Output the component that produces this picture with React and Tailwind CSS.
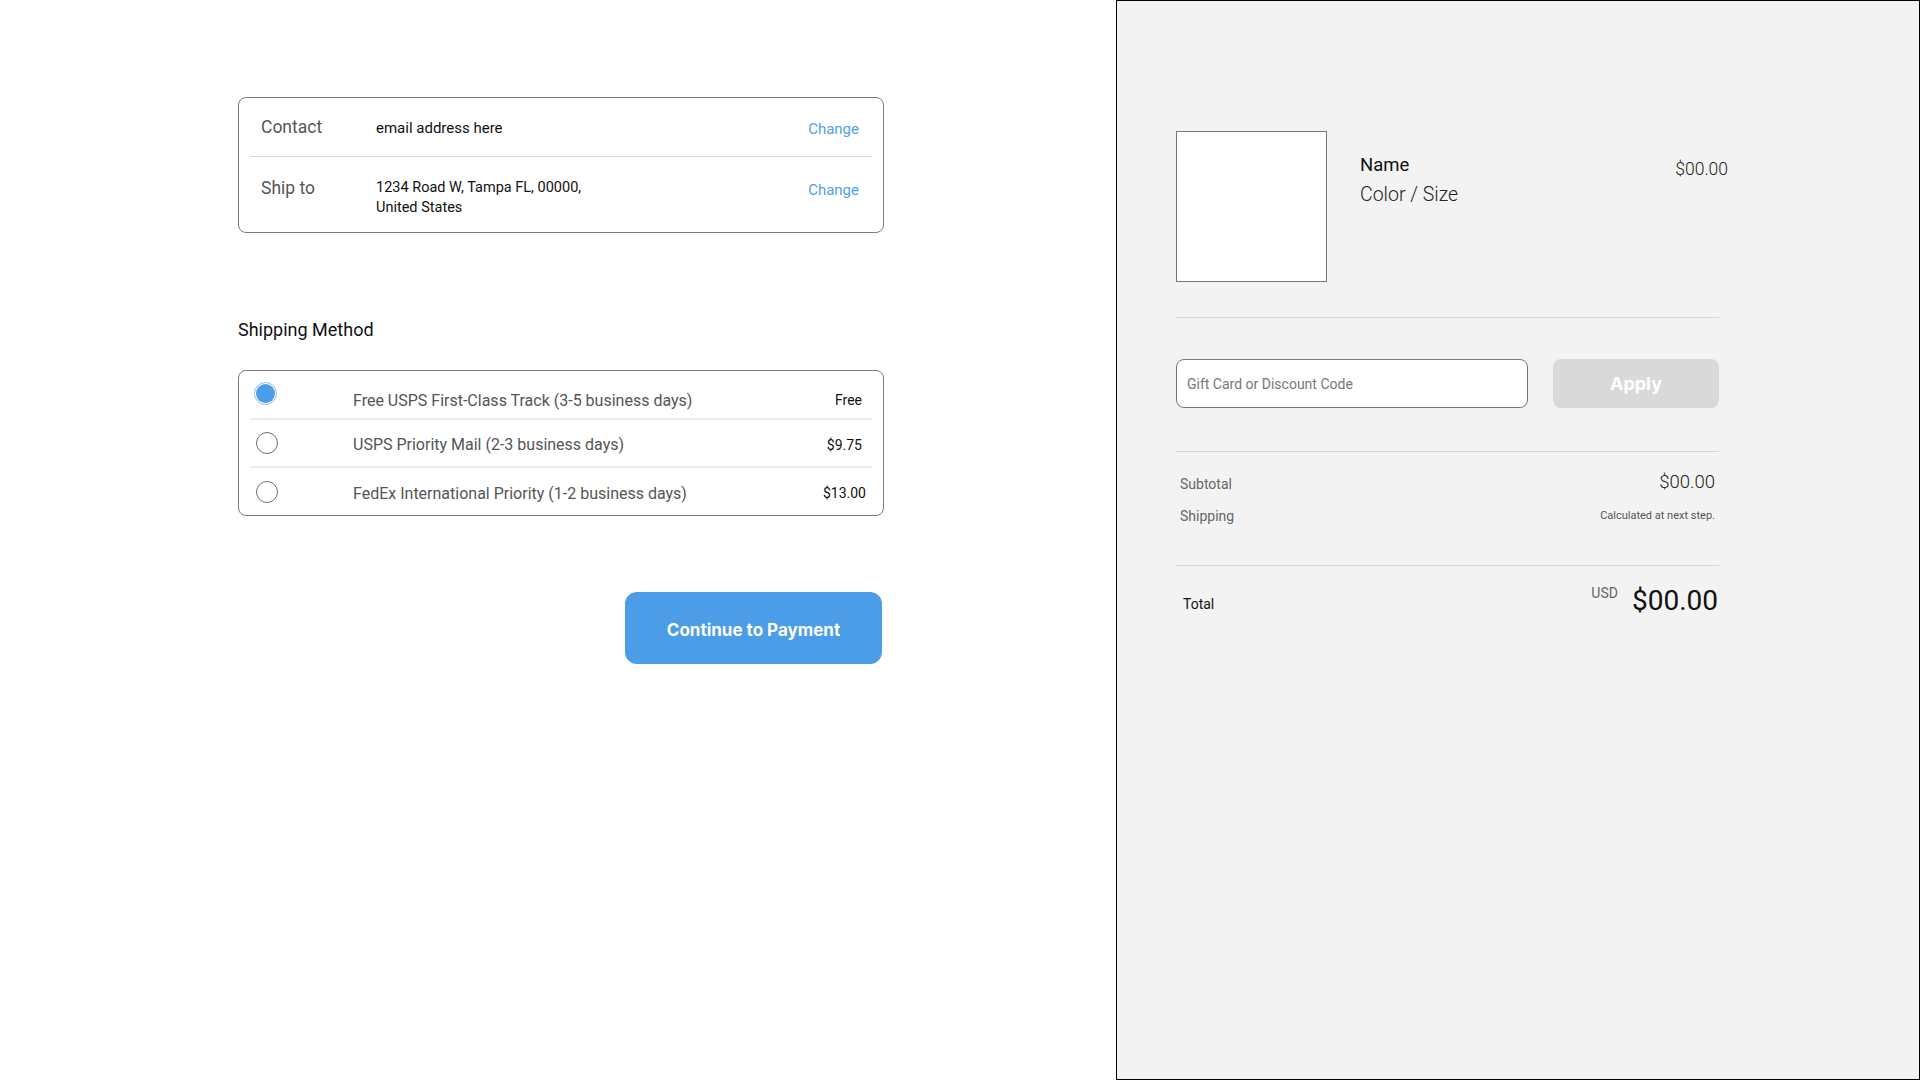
import React, { useState } from "react";

const methods = [
  { id: "usps-first", label: "Free USPS First-Class Track (3-5 business days)", price: "Free", h: "h-[49px]" },
  { id: "usps-priority", label: "USPS Priority Mail (2-3 business days)", price: "$9.75", h: "h-[48px]" },
  { id: "fedex", label: "FedEx International Priority (1-2 business days)", price: "$13.00", h: "h-[47px]" },
];

const Radio = ({ checked }) =>
  checked ? (
    <span className="flex h-[23px] w-[23px] items-center justify-center rounded-full border border-[#8dbbea] bg-white">
      <span className="h-[19px] w-[19px] rounded-full bg-[#4a9de6]"></span>
    </span>
  ) : (
    <span className="block h-[22px] w-[22px] rounded-full border border-[#6f6f6f] bg-white"></span>
  );

const App = () => {
  const [selected, setSelected] = useState("usps-first");

  return (
    <div className="flex h-screen w-full bg-white font-['Roboto',sans-serif]">
      {/* left column */}
      <div className="w-[1116px] shrink-0 pl-[238px] pt-[97px]">
        <div className="w-[646px]">
          <div className="rounded-[8px] border border-[#7a7a7a] px-[11px]">
            <div className="flex h-[59px] items-center border-b border-[#dcdcdc] pl-[11px] pr-[13px]">
              <span className="w-[115px] text-[17.5px] text-[#555]">Contact</span>
              <span className="flex-1 pt-[2px] text-[15px] text-[#111]">email address here</span>
              <a className="pt-[4px] text-[15px] text-[#4ea1e9]" href="#">Change</a>
            </div>
            <div className="flex h-[75px] items-start pl-[11px] pr-[13px] pt-[20px]">
              <span className="w-[115px] text-[17.5px] leading-[22px] text-[#555]">Ship to</span>
              <span className="flex-1 pt-[1px] text-[14.5px] leading-[20px] text-[#111]">
                1234 Road W, Tampa FL, 00000,
                <br />
                United States
              </span>
              <a className="pt-[2px] text-[15px] leading-[22px] text-[#4ea1e9]" href="#">Change</a>
            </div>
          </div>

          <h2 className="mt-[87px] text-[18px] leading-[20px] text-[#111]">Shipping Method</h2>

          <div className="mt-[30px] rounded-[8px] border border-[#7a7a7a] px-[11px]">
            {methods.map((m, i) => (
              <label
                key={m.id}
                onClick={() => setSelected(m.id)}
                className={`flex cursor-pointer items-center ${m.h} ${
                  i < methods.length - 1 ? "border-b-2 border-[#ececec]" : ""
                }`}
              >
                <span className={`w-[103px] ${i === 0 ? "mb-[3px] pl-[4px]" : "pl-[6px]"}`}>
                  <Radio checked={selected === m.id} />
                </span>
                <span className={`flex-1 text-[16px] text-[#555] ${i === 0 ? "mt-[12px]" : "mt-[4px]"}`}>
                  {m.label}
                </span>
                <span
                  className={`text-[14px] text-[#111] ${i === 0 ? "mt-[12px] pr-[10px]" : "mt-[4px]"} ${
                    i === 1 ? "pr-[10px]" : ""
                  } ${i === 2 ? "pr-[6px]" : ""}`}
                >
                  {m.price}
                </span>
              </label>
            ))}
          </div>

          <div className="mt-[76px] flex justify-end pr-[2px]">
            <button className="h-[72px] w-[257px] rounded-[12px] bg-[#4a9de6] pt-[6px] font-['Inter',sans-serif] text-[17px] font-bold text-white">
              Continue to Payment
            </button>
          </div>
        </div>
      </div>

      {/* order summary */}
      <div className="flex-1 border border-black bg-[#f3f3f3] pl-[59px] pt-[130px]">
        <div className="w-[543px]">
          <div className="flex">
            <div className="h-[151px] w-[151px] border border-[#777] bg-white"></div>
            <div className="ml-[33px] flex-1 pt-[23px]">
              <div className="text-[18.5px] leading-[22px] text-[#111]">Name</div>
              <div className="mt-[8px] text-[19.5px] font-light leading-[22px] text-[#222]">Color / Size</div>
            </div>
            <div className="-mr-[9px] pt-[27px] text-[17.5px] font-light leading-[22px] text-[#222]">$00.00</div>
          </div>

          <div className="mt-[35px] h-px bg-[#d6d6d6]"></div>

          <div className="mt-[41px] flex gap-[25px]">
            <input
              className="h-[49px] w-[352px] rounded-[8px] border border-[#777] bg-white px-[10px] text-[14px] text-[#333] outline-none placeholder:text-[#777]"
              placeholder="Gift Card or Discount Code"
            />
            <button className="h-[49px] flex-1 rounded-[8px] bg-[#d9d9d9] font-['Inter',sans-serif] text-[18px] font-bold text-white">
              Apply
            </button>
          </div>

          <div className="mt-[43px] h-px bg-[#d6d6d6]"></div>

          <div className="mt-[19px] px-[4px]">
            <div className="flex h-[24px] items-center justify-between">
              <span className="mt-[2px] text-[14px] text-[#666]">Subtotal</span>
              <span className="text-[18.5px] font-light text-[#222]">$00.00</span>
            </div>
            <div className="mt-[9px] flex h-[24px] items-center justify-between">
              <span className="text-[14px] text-[#666]">Shipping</span>
              <span className="text-[11px] text-[#555]">Calculated at next step.</span>
            </div>
          </div>

          <div className="mt-[37px] h-px bg-[#d6d6d6]"></div>

          <div className="mt-[18px] flex h-[34px] items-start justify-between pl-[7px] pr-[1px]">
            <span className="mt-[10px] text-[14px] leading-[20px] text-[#111]">Total</span>
            <div className="flex items-start gap-[14px]">
              <span className="mt-[1px] text-[14px] leading-[16px] text-[#666]">USD</span>
              <span className="text-[28px] leading-[34px] text-[#111]">$00.00</span>
            </div>
          </div>
        </div>
      </div>
    </div>
  );
};

export default App;
